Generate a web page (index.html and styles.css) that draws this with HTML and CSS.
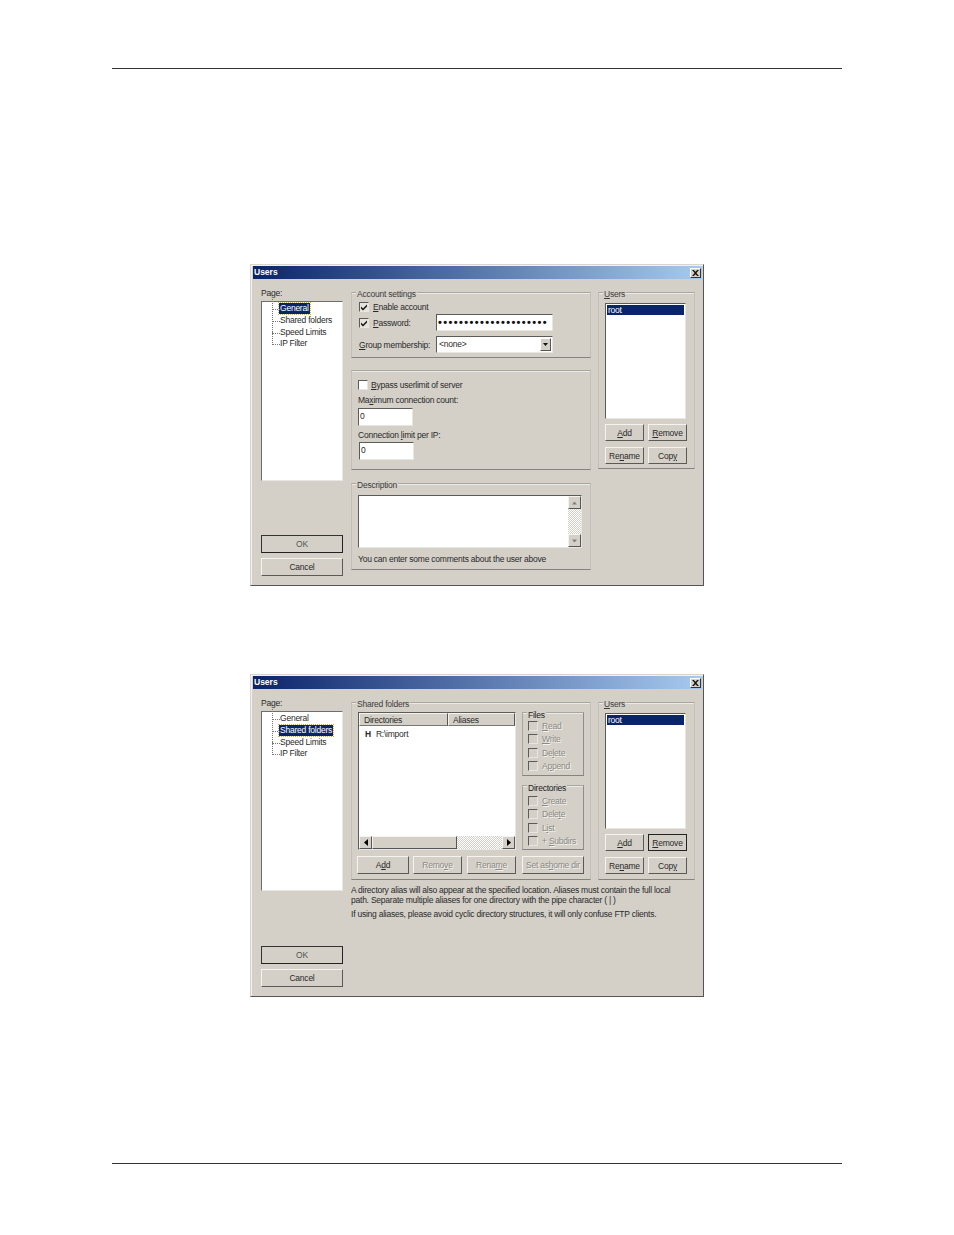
FILE: index.html
```html
<!DOCTYPE html>
<html lang="en">
<head>
<meta charset="utf-8">
<title>Users</title>
<link rel="stylesheet" href="styles.css">
</head>
<body>
<main class="page">
  <hr class="rule">

  <section class="dialog dialog-one">
    <header class="titlebar"><span>Users</span><span class="close"><svg viewBox="0 0 8 7" width="8" height="7"><path d="M0 0l2 0 2 2 2-2 2 0-3 3.500 3 3.500-2 0-2-2-2 2-2 0 3-3.500z"/></svg></span></header>
    <div class="body">
      <div class="left">
        <div class="page-label">Page:</div>
        <ul class="tree">
          <li class="node"><span class="selected">General</span></li>
          <li class="node"><span>Shared folders</span></li>
          <li class="node"><span>Speed Limits</span></li>
          <li class="node"><span>IP Filter</span></li>
        </ul>
        <div class="spacer"></div>
        <div class="btn default">OK</div>
        <div class="btn cancel">Cancel</div>
      </div>
      <div class="center">
        <div class="group account">
          <span class="legend">Account settings</span>
          <div class="check-row"><span class="check on"><svg viewBox="0 0 8 8" width="8" height="8"><path d="M1 3.500l2 2 4-4v2l-4 4-2-2z"/></svg></span><span><u>E</u>nable account</span></div>
          <div class="field-row"><span class="check on"><svg viewBox="0 0 8 8" width="8" height="8"><path d="M1 3.500l2 2 4-4v2l-4 4-2-2z"/></svg></span><span class="pw-label"><u>P</u>assword:</span><span class="input wide dots">•••••••••••••••••••••</span></div>
          <div class="field-row combo-row"><span class="group-label"><u>G</u>roup membership:</span><span class="input wide combo"><span>&lt;none&gt;</span><span class="drop"><svg viewBox="0 0 7 4" width="7" height="4"><path d="M0 0h7l-3.500 4z"/></svg></span></span></div>
        </div>
        <div class="group limits">
          <div class="check-row bypass"><span class="check"></span><span><u>B</u>ypass userlimit of server</span></div>
          <div class="text-line">Ma<u>x</u>imum connection count:</div>
          <div class="input small">0</div>
          <div class="text-line second">Connection <u>l</u>imit per IP:</div>
          <div class="input small shift">0</div>
        </div>
        <div class="group description">
          <span class="legend">Description</span>
          <div class="memo">
            <div class="vscroll">
              <span class="sbtn"><svg viewBox="0 0 7 4" width="7" height="4"><path d="M3.500 0l3.500 4h-7z" fill="#808080"/></svg></span>
              <span class="strack"></span>
              <span class="sbtn"><svg viewBox="0 0 7 4" width="7" height="4"><path d="M0 0h7l-3.500 4z" fill="#808080"/></svg></span>
            </div>
          </div>
          <div class="memo-note">You can enter some comments about the user above</div>
        </div>
      </div>
      <div class="right">
        <div class="group users">
          <span class="legend users-legend"><u>U</u>sers</span>
          <div class="listbox"><div class="list-sel">root</div></div>
          <div class="user-btns">
            <div class="btn"><u>A</u>dd</div>
            <div class="btn"><u>R</u>emove</div>
            <div class="btn">Re<u>n</u>ame</div>
            <div class="btn">Cop<u>y</u></div>
          </div>
        </div>
      </div>
    </div>
  </section>

  <section class="dialog dialog-two">
    <header class="titlebar"><span>Users</span><span class="close"><svg viewBox="0 0 8 7" width="8" height="7"><path d="M0 0l2 0 2 2 2-2 2 0-3 3.500 3 3.500-2 0-2-2-2 2-2 0 3-3.500z"/></svg></span></header>
    <div class="body">
      <div class="left">
        <div class="page-label">Page:</div>
        <ul class="tree">
          <li class="node"><span>General</span></li>
          <li class="node"><span class="selected">Shared folders</span></li>
          <li class="node"><span>Speed Limits</span></li>
          <li class="node"><span>IP Filter</span></li>
        </ul>
        <div class="spacer"></div>
        <div class="btn default">OK</div>
        <div class="btn cancel">Cancel</div>
      </div>
      <div class="center">
        <div class="group shared">
          <span class="legend">Shared folders</span>
          <div class="shared-top">
            <div class="dirlist">
              <div class="dir-head"><span class="col-dir">Directories</span><span class="col-alias">Aliases</span></div>
              <div class="dir-row"><b>H</b><span>R:\import</span></div>
              <div class="hscroll">
                <span class="sbtn"><svg viewBox="0 0 4 7" width="4" height="7"><path d="M4 0v7l-4-3.500z"/></svg></span>
                <span class="hthumb"></span>
                <span class="strack"></span>
                <span class="sbtn"><svg viewBox="0 0 4 7" width="4" height="7"><path d="M0 0v7l4-3.500z"/></svg></span>
              </div>
            </div>
            <div class="perms">
              <div class="group perm-files">
                <span class="legend dark">Files</span>
                <div class="perm"><span class="check"></span><span class="disabled"><u>R</u>ead</span></div>
                <div class="perm"><span class="check"></span><span class="disabled"><u>W</u>rite</span></div>
                <div class="perm"><span class="check"></span><span class="disabled">De<u>l</u>ete</span></div>
                <div class="perm"><span class="check"></span><span class="disabled">A<u>p</u>pend</span></div>
              </div>
              <div class="group perm-dirs">
                <span class="legend dark">Directories</span>
                <div class="perm"><span class="check"></span><span class="disabled"><u>C</u>reate</span></div>
                <div class="perm"><span class="check"></span><span class="disabled">Dele<u>t</u>e</span></div>
                <div class="perm"><span class="check"></span><span class="disabled">L<u>i</u>st</span></div>
                <div class="perm"><span class="check"></span><span class="disabled">+ <u>S</u>ubdirs</span></div>
              </div>
            </div>
          </div>
          <div class="shared-btns">
            <div class="btn b-add">A<u>d</u>d</div>
            <div class="btn b-rem disabled">Remo<u>v</u>e</div>
            <div class="btn b-ren disabled">Rena<u>m</u>e</div>
            <div class="btn b-home disabled">Set as <u>h</u>ome dir</div>
          </div>
        </div>
        <div class="help">
          <p>A directory alias will also appear at the specified location. Aliases must contain the full local path. Separate multiple aliases for one directory with the pipe character ( | )</p>
          <p class="help-last">If using aliases, please avoid cyclic directory structures, it will only confuse FTP clients.</p>
        </div>
      </div>
      <div class="right">
        <div class="group users users-two">
          <span class="legend users-legend"><u>U</u>sers</span>
          <div class="listbox"><div class="list-sel">root</div></div>
          <div class="user-btns">
            <div class="btn"><u>A</u>dd</div>
            <div class="btn focused"><u>R</u>emove</div>
            <div class="btn">Re<u>n</u>ame</div>
            <div class="btn">Cop<u>y</u></div>
          </div>
        </div>
      </div>
    </div>
  </section>

  <hr class="rule rule-bottom">
</main>
</body>
</html>
```
FILE: styles.css
```css
* { box-sizing: border-box; }
html, body { margin: 0; padding: 0; background: #fff; }
body { width: 954px; height: 1235px; overflow: hidden; font-family: "Liberation Sans", Arial, sans-serif; font-size: 8.5px; letter-spacing: -0.230px; color: #2a2a2a; }
.page { padding: 68px 112px 0; }
.rule { margin: 0; border: 0; height: 1px; background: #333; width: 730px; }
.rule-bottom { margin-top: 166px; }

.dialog { width: 454px; margin-left: 138px; background: #d4d0c8; padding: 1px 1px 0; border: 1px solid; border-color: #d8d5ce #555 #555 #d8d5ce; box-shadow: inset 1px 1px 0 #f2f1ee; display: flex; flex-direction: column; }
.dialog-one { margin-top: 195px; height: 322px; }
.dialog-two { margin-top: 88px; height: 323px; }

.titlebar { height: 13px; margin-left: 1px; padding: 0 1px 1px 1px; display: flex; justify-content: space-between; align-items: center; background: linear-gradient(90deg, #0a246a, #a6caf0); color: #fff; font-weight: 700; font-size: 8.5px; letter-spacing: 0; }
.close { width: 11px; height: 10px; margin-top: 1px; background: #d4d0c8; border: 1px solid; border-color: #fff #333 #333 #fff; display: flex; align-items: center; justify-content: center; }
.close svg { display: block; width: 7px; height: 6px; fill: #111; }

.body { flex: 1; display: grid; grid-template-columns: 82px 240px 96px; column-gap: 8px; padding: 9px 0 9px 9px; }
.left { display: flex; flex-direction: column; }
.page-label { height: 13px; line-height: 11px; }
.tree { list-style: none; margin: 0; padding: 1px 0 0 17px; height: 180px; background: #fff; border: 1px solid; border-color: #6f6e6a #e8e6e2 #e8e6e2 #6f6e6a; }
.node { position: relative; height: 11.800px; line-height: 11px; white-space: nowrap; }
.node span { padding: 0 1px; display: inline-block; height: 11px; }
.node::before { content: ""; position: absolute; left: -7px; top: -6px; width: 7px; height: 12px; border-left: 1px dotted #777; border-bottom: 1px dotted #777; }
.selected { background: #0a246a; color: #fff; outline: 1px dotted #c9b25a; }
.spacer { flex: 1; }

.btn { height: 18px; display: flex; align-items: center; justify-content: center; background: #d4d0c8; border: 1px solid; border-color: #f4f3f0 #5a5a58 #5a5a58 #f4f3f0; white-space: nowrap; }
.default { border-color: #333 #222 #222 #333; color: #555; }
.cancel { margin-top: 5px; }
.focused { border-color: #222; }

.center { margin-top: 4px; }
.right { margin-top: 4px; margin-left: -1px; }
.group { position: relative; border: 1px solid #c2bfb8; border-top-color: #a8a6a0; border-bottom-color: #85837f; box-shadow: inset 0 1px 0 #eceae6; }
.legend { position: absolute; left: 4px; top: -4px; padding: 0 1px; height: 10px; line-height: 10px; background: #d4d0c8; color: #3c3c3c; white-space: nowrap; }
.legend.dark { color: #222; left: 4px; top: -3px; }

.account { height: 66px; padding: 7px 0 0 7px; }
.account .check-row { margin-bottom: 1px; }
.limits { height: 100px; margin-top: 12px; padding: 7px 0 0 6px; }
.description { height: 87px; margin-top: 13px; padding: 11px 0 0 6px; }

.check-row, .field-row, .perm { display: flex; align-items: center; }
.check-row { height: 13px; }
.check { width: 10px; height: 10px; flex: none; margin-right: 4px; background: #fff; border: 1px solid; border-color: #5c5b58 #e8e6e2 #e8e6e2 #5c5b58; display: flex; align-items: center; justify-content: center; }
.check svg { display: block; fill: #111; }
.check.on { background: #e6e3de; }
.perm .check { background: #d4d0c8; }
.field-row { height: 17px; }
.pw-label { width: 63px; }
.group-label { width: 77px; }
.combo-row { margin-top: 5px; }
.input { height: 18px; background: #fff; border: 1px solid; border-color: #5c5b58 #e8e6e2 #e8e6e2 #5c5b58; line-height: 14px; padding-left: 1px; }
.wide { width: 117px; height: 17px; flex: none; }
.dots { font-size: 11px; font-weight: 700; letter-spacing: 1.390px; color: #111; white-space: nowrap; overflow: hidden; }
.combo { display: flex; justify-content: space-between; padding-right: 1px; padding-left: 2px; }
.drop { width: 11px; height: 13px; margin-top: 1px; background: #d4d0c8; border: 1px solid; border-color: #fff #555 #555 #fff; display: flex; align-items: center; justify-content: center; }
.drop svg { display: block; width: 5px; height: 3px; fill: #111; }

.bypass { margin-bottom: 4px; }
.bypass .check { margin-right: 3px; }
.text-line { height: 11px; line-height: 11px; margin-bottom: 2px; }
.second { margin-top: 4px; margin-bottom: 1px; }
.small { width: 55px; }
.shift { margin-left: 1px; }

.memo { width: 224px; height: 53px; background: #fff; border: 1px solid; border-color: #5c5b58 #e8e6e2 #e8e6e2 #5c5b58; display: flex; justify-content: flex-end; }
.vscroll { width: 13px; display: flex; flex-direction: column; }
.sbtn { flex: none; width: 13px; height: 13px; background: #d4d0c8; border: 1px solid; border-color: #f4f3f0 #555 #555 #f4f3f0; display: flex; align-items: center; justify-content: center; }
.sbtn svg { display: block; width: 5px; height: 4px; }
.hscroll .sbtn svg { width: 4px; height: 7px; }
.strack { flex: 1; background: repeating-conic-gradient(#fff 0 25%, #d4d0c8 0 50%) 0 0 / 2px 2px; }
.memo-note { margin-top: 6px; height: 11px; line-height: 11px; }

.users { height: 177px; padding: 10px 0 0 6px; }
.users-two { height: 178px; }
.listbox { width: 81px; height: 116px; background: #fff; border: 1px solid; border-color: #5c5b58 #e8e6e2 #e8e6e2 #5c5b58; padding: 1px; }
.list-sel { height: 10px; line-height: 10px; padding-left: 1px; background: #0a246a; color: #fff; }
.user-btns { margin-top: 5px; display: grid; grid-template-columns: 39px 39px; grid-auto-rows: 17px; column-gap: 4px; row-gap: 6px; }
.user-btns .btn { height: 17px; }

.shared { height: 178px; padding: 9px 0 0 6px; }
.shared-top { display: flex; gap: 6px; }
.dirlist { width: 158px; height: 138px; background: #fff; border: 1px solid; border-color: #5c5b58 #e8e6e2 #e8e6e2 #5c5b58; display: flex; flex-direction: column; }
.dir-head { display: flex; height: 13px; flex: none; }
.dir-head span { background: #d4d0c8; border: 1px solid; border-color: #f4f3f0 #555 #777 #f4f3f0; line-height: 13px; padding-left: 4px; }
.col-dir { width: 89px; }
.col-alias { flex: 1; }
.dir-row { flex: 1; display: flex; padding: 3px 0 0 6px; line-height: 11px; gap: 5px; }
.dir-row b { font-weight: 700; }
.hscroll { display: flex; height: 13px; flex: none; }
.hthumb { width: 85px; background: #d4d0c8; border: 1px solid; border-color: #f4f3f0 #555 #555 #f4f3f0; }
.perms { width: 62px; }
.perm-files { height: 64px; padding-top: 6px; border-color: #a8a6a0 #8f8d88 #85837f #a8a6a0; }
.perm-dirs { height: 65px; margin-top: 9px; padding-top: 8px; border-color: #a8a6a0 #8f8d88 #85837f #a8a6a0; }
.perm { height: 13.500px; padding-left: 5px; }
.disabled { color: #8b8983; text-shadow: 1px 1px 0 #f4f3f0; }
.shared-btns { display: flex; margin: 6px 0 0 -1px; }
.b-add { width: 52px; }
.b-rem { width: 49px; margin-left: 4px; }
.b-ren { width: 49px; margin-left: 5px; }
.b-home { width: 62px; margin-left: 6px; }
.help { margin-top: 5px; width: 325px; line-height: 10.300px; }
.help p { margin: 0; }
.help .help-last { margin-top: 3px; white-space: nowrap; }
```
